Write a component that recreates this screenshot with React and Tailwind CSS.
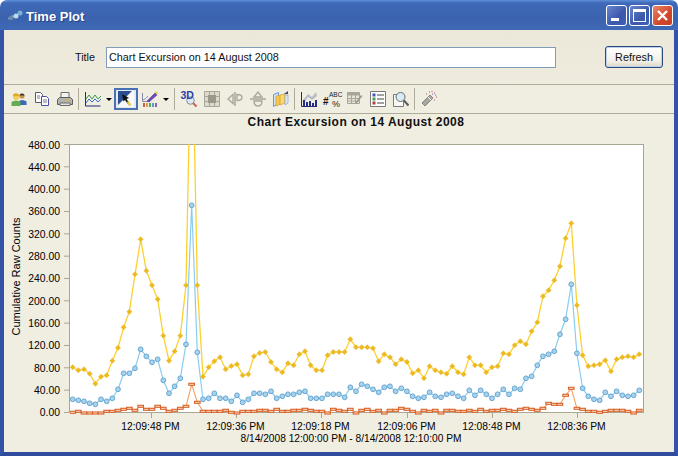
import React from "react";

// screen y of every sample, read off the plot (index 21 of the yellow one runs off the top)
const YELLOW = [367.3,370.3,369.3,373.7,383.7,376.7,375.3,360.7,347.7,327.3,311.7,274.3,239.3,270.7,285.3,299.3,335.7,360.7,351.3,335.7,285.3,3,285.3,376.7,367.3,361.3,357.3,369.3,
  366,364.3,375.3,374.3,356.3,353,352,362,369.3,372.3,363.3,365.3,354.3,351.3,365.3,370.3,370.3,355.3,352,352,352,339.3,347.3,347.3,347.3,348.3,361.3,354.3,357.3,364.3,359.3,362,373.3,370.3,378.3,366.3,370.3,372.3,373.7,366.3,372.3,
  374.3,357.3,365.3,365.3,372.3,367.3,366.3,353.3,354.3,345.3,341.3,344.3,331.3,322.3,296.3,290.3,280.3,266.3,238.3,223.3,305.3,355.3,366.3,365.3,364.3,360.3,371.3,359.3,357.3,356.3,357.3,354.3];

const BLUE = [399.3,400.3,401.3,403.3,404.3,399.3,401.3,398.3,389.3,373.3,373.3,368.3,349.3,356.3,362.3,359.3,380.3,393.3,386.3,378.3,344.3,205.3,352.3,399.3,398.3,393.3,398.3,398.3,
  401.3,395.3,402.3,399.3,393.3,393.3,394.3,391.3,398.3,396.3,394.3,394.3,392.3,391.3,398.3,398.3,398.3,394.3,394.3,394.3,397.3,387.3,391.3,384.3,386.3,389.3,392.3,387.3,386.3,391.3,388.3,391.3,396.3,398.3,397.3,392.3,396.3,397.3,394.3,393.3,396.3,
  398.3,390.3,395.3,390.3,394.3,398.3,394.3,389.3,394.3,388.3,389.3,378.3,376.3,365.3,356.3,354.3,351.3,334.3,319.3,284.3,353.3,388.3,396.3,399.3,400.3,392.3,396.3,391.3,395.3,396.3,395.3,390.3];

const ORANGE = [412.3,411.3,413,413,413,413,411.3,411.3,410.3,409.3,408.3,410.3,406.3,409.3,409.3,406.3,408.3,411.3,410.3,408.3,406.3,384.3,402.3,411.3,411.3,411.3,411.3,410.3,
  412.3,413,411.3,411.3,411.3,410.3,410.3,411.3,409.3,411.3,411.3,410.3,410.3,409.3,410.3,411.3,411.3,413,409.3,410.3,411.3,409.3,413,410.3,409.3,411.3,410.3,413,410.3,410.3,408.3,409.3,411.3,413,410.3,411.3,410.3,413,410.3,410.3,411.3,
  411.3,410.3,411.3,409.3,411.3,410.3,410.3,409.3,410.3,411.3,409.3,408.3,409.3,410.3,408.3,403.3,404.3,404.3,395.3,388.3,408.3,409.3,411.3,411.3,412.3,411.3,410.3,410.3,410.3,411.3,413,410.3];

const xAt = (i) => 72.67 + i * 5.666;
const toPoints = (ys) => ys.map((y, i) => `${xAt(i).toFixed(1)},${y}`).join(" ");

const Y_LABELS = ["480.00","440.00","400.00","360.00","320.00","280.00","240.00","200.00","160.00","120.00","80.00","40.00","0.00"];
const X_TICKS = [
  { x: 151.5, label: "12:09:48 PM" },
  { x: 236.5, label: "12:09:36 PM" },
  { x: 321.5, label: "12:09:18 PM" },
  { x: 407.5, label: "12:09:06 PM" },
  { x: 492.5, label: "12:08:48 PM" },
  { x: 577.5, label: "12:08:36 PM" },
];

function Chart() {
  return (
    <svg viewBox="4 114 670 338" className="block w-[670px] h-[338px]">
      <defs>
        <clipPath id="plot">
          <rect x="70" y="144" width="574" height="272" />
        </clipPath>
      </defs>
      <text x="356" y="126" textAnchor="middle" className="text-[12px] font-bold tracking-[0.46px] fill-[#111]">
        Chart Excursion on 14 August 2008
      </text>
      <rect x="69.5" y="144.5" width="574" height="268" fill="#fff" stroke="#a9a692" />
      {Y_LABELS.map((label, i) => {
        const y = 144.5 + i * 22.33;
        return (
          <g key={label}>
            <line x1="64" x2="70" y1={y} y2={y} stroke="#a9a692" />
            <text x="60" y={y + 4} textAnchor="end" className="text-[10.4px] fill-black">{label}</text>
          </g>
        );
      })}
      {X_TICKS.map((t) => (
        <g key={t.label}>
          <line x1={t.x} x2={t.x} y1="413" y2="418" stroke="#a9a692" />
          <text x={t.x - 1} y="430" textAnchor="middle" className="text-[10.3px] fill-black">{t.label}</text>
        </g>
      ))}
      <text x="351" y="442" textAnchor="middle" className="text-[10.2px] fill-black">
        8/14/2008 12:00:00 PM - 8/14/2008 12:10:00 PM
      </text>
      <text transform="translate(20 276.5) rotate(-90)" textAnchor="middle" className="text-[11px] fill-black">
        Cumulative Raw Counts
      </text>
      <g clipPath="url(#plot)">
        <polyline points={toPoints(YELLOW)} fill="none" stroke="#fdd02f" strokeWidth="1.3" />
        <polyline points={toPoints(BLUE)} fill="none" stroke="#88cdf0" strokeWidth="1.2" />
        <polyline points={toPoints(ORANGE)} fill="none" stroke="#f0a060" strokeWidth="1.1" />
        {YELLOW.map((y, i) => (
          <path key={i} d={`M${xAt(i)} ${y - 2.7}l2.7 2.7l-2.7 2.7l-2.7-2.7z`} fill="#edb91c" stroke="#e8c860" strokeWidth="0.4" />
        ))}
        {BLUE.map((y, i) => (
          <circle key={i} cx={xAt(i)} cy={y} r="2.4" fill="#a6d3ee" stroke="#5f9fcb" strokeWidth="0.9" />
        ))}
        {ORANGE.map((y, i) => (
          <rect key={i} x={xAt(i) - 2.8} y={y - 1} width="5.6" height="2" fill="#fbe6cf" stroke="#d9622a" strokeWidth="1.1" />
        ))}
      </g>
    </svg>
  );
}

function Caption({ kind }) {
  return (
    <div className="relative w-[21px] h-[21px] rounded-[3px] border border-white bg-[linear-gradient(135deg,#6a86cf,#3a57ab_60%,#3f62b8)] flex items-center justify-center">
      {kind === "min" && <div className="w-[8px] h-[3px] bg-white mt-[9px] mr-[3px]" />}
      {kind === "max" && <div className="w-[13px] h-[13px] border border-white border-t-[3px]" />}
    </div>
  );
}

const Users = () => (
  <svg viewBox="0 0 16 16" className="w-4 h-4">
    <circle cx="11" cy="5" r="2.6" fill="#c98f5a" />
    <path d="M8.4 4.5a2.7 2.7 0 0 1 5.2 0z" fill="#4a3524" />
    <path d="M7.5 14v-3.5q3.5-3 8 0V14z" fill="#3c69b5" />
    <circle cx="5" cy="6" r="3" fill="#f0cf58" />
    <path d="M2 5.3a3 3 0 0 1 6 0q-3-.6-6 0z" fill="#e0a820" />
    <path d="M.5 15v-4q4.5-3 9 0v4z" fill="#62ad4c" />
  </svg>
);

const Copy = () => (
  <svg viewBox="0 0 16 16" className="w-4 h-4">
    <path d="M1.5 1.5h5l2 2v8h-7z" fill="#fff" stroke="#5a5a6a" />
    <path d="M7.5 5.5h5l2 2v7h-7z" fill="#fff" stroke="#4f4fa8" />
    <path d="M3 5h3M3 7h3M9 9h4M9 11h4" stroke="#7a7a90" />
  </svg>
);

const Printer = () => (
  <svg viewBox="0 0 16 16" className="w-4 h-4">
    <path d="M4 7V1.5h8V7" fill="#f4f4f0" stroke="#6e6e6e" />
    <path d="M.5 8.5l2-2h11l2 2v5h-15z" fill="#b2b2ae" stroke="#5e5e5e" />
    <path d="M3 12h10v2.500H3z" fill="#e4e4e0" stroke="#6e6e6e" />
    <path d="M9 9h4" stroke="#e0b030" />
  </svg>
);

const LineChart = () => (
  <svg viewBox="0 0 16 16" className="w-4 h-4">
    <path d="M.5 1v14h15" fill="none" stroke="#232a78" />
    <path d="M1 8l3-4 3 4 3-4 3 4 3-3" fill="none" stroke="#3a9a4a" />
    <path d="M1 12l3-4 3 3 3-3 3 3 3-3" fill="none" stroke="#3a6ad0" />
  </svg>
);

const Pointer = () => (
  <svg viewBox="0 0 16 16" className="w-4 h-4">
    <path d="M0 0h16v16H0z" fill="#f8f8f8" />
    <path d="M0 0h14L0 14z" fill="#2c4f92" />
    <path d="M4 3l7 4-2.500 1 2.500 3.500-1.500 1-2.500-3.500-1.500 1.500z" fill="#111" />
    <path d="M10 10l3 3.500-1.500 1.500-2.500-3.500z" fill="#f5d838" stroke="#8a7a20" strokeWidth="0.300" />
  </svg>
);

const Palette = () => (
  <svg viewBox="0 0 16 16" className="w-4 h-4">
    <path d="M.5 2v8.500H8" fill="none" stroke="#8a8aa0" />
    <path d="M1 9q3-1 5-4" fill="none" stroke="#7a9ad0" />
    <path d="M5 10L13 2l2 2-8 7z" fill="#7248b8" stroke="#4a2f90" strokeWidth="0.5" />
    <path d="M12.500 1l2.500 2.500 1-2L15 .5z" fill="#e8d248" />
    <path d="M1 12h2v4H1z" fill="#d05a5a" />
    <path d="M4 12h2v4H4z" fill="#e0a040" />
    <path d="M7 12h2v4H7z" fill="#58a858" />
    <path d="M10 12h2v4h-2z" fill="#5a9ad0" />
    <path d="M13 12h2v4h-2z" fill="#8a62c0" />
  </svg>
);

const ThreeD = () => (
  <svg viewBox="0 0 16 16" className="w-4 h-4 overflow-visible">
    <circle cx="9.500" cy="9.500" r="3.800" fill="#d8e8f4" stroke="#8a8a9a" />
    <path d="M12 12l3.500 3.500" stroke="#d0604a" strokeWidth="2" />
    <text x="-0.500" y="7.500" className="text-[10.500px] font-bold fill-[#2a3fa8]">3D</text>
  </svg>
);

const GridOff = () => (
  <svg viewBox="0 0 16 16" className="w-4 h-4">
    <path d="M.5.5h15v15H.5zM.5 5.500h15M.5 10.500h15M5.500.5v15M10.500.5v15" fill="#dcdaca" stroke="#a8a698" />
    <path d="M4 4h8v8H4z" fill="#9a9888" />
  </svg>
);

const FlipH = () => (
  <svg viewBox="0 0 16 16" className="w-4 h-4">
    <path d="M8 1v14" stroke="#a8a698" strokeWidth="1.500" />
    <path d="M6 3.500L1 8l5 4.500zM10 3.500q5 0 5 3t-5 3z" fill="none" stroke="#a8a698" strokeWidth="1.300" />
  </svg>
);

const FlipV = () => (
  <svg viewBox="0 0 16 16" className="w-4 h-4">
    <path d="M0 8h16" stroke="#a8a698" strokeWidth="1.500" />
    <path d="M4 6L8 1l4 5zM4 10q0 5 4 5t4-5z" fill="none" stroke="#a8a698" strokeWidth="1.300" />
  </svg>
);

const Folder = () => (
  <svg viewBox="0 0 16 16" className="w-4 h-4">
    <path d="M.5 3.500l5-2v11l-5 3z" fill="#cfe2f6" stroke="#6a9ad0" />
    <path d="M3 5l5-1v9l-5 2z" fill="#f5c84c" stroke="#c8963a" strokeWidth="0.600" />
    <path d="M7 4l5-1v9l-5 2z" fill="#f8d868" stroke="#c8963a" strokeWidth="0.600" />
    <path d="M11 3l4-3v3h-1.500z" fill="#3a4a7a" />
    <path d="M12 4h3v8l-3 2z" fill="#dce8f4" stroke="#7a9ad0" strokeWidth="0.600" />
  </svg>
);

const BarChart = () => (
  <svg viewBox="0 0 16 16" className="w-4 h-4">
    <path d="M.5 1v14.500H16" fill="none" stroke="#232a78" />
    <path d="M2 9l5-6 4 3 4-5 1 4-5 4-4-3-4 6z" fill="#b8bcc8" />
    <path d="M2 9h2v6H2zM5 11h2v4H5zM8 10h2v5H8zM11 12h2v3h-2zM14 9h2v6h-2z" fill="#262e88" />
  </svg>
);

const AbcHash = () => (
  <svg viewBox="0 0 16 16" className="w-4 h-4 overflow-visible">
    <text x="5" y="6" className="text-[6.500px] fill-[#222]">ABC</text>
    <text x="-1" y="14" className="text-[10px] font-bold fill-[#111]">#</text>
    <text x="8" y="16" className="text-[9px] fill-[#222]">%</text>
  </svg>
);

const TablePen = () => (
  <svg viewBox="0 0 16 16" className="w-4 h-4">
    <path d="M.5 1.500h12v11H.5z" fill="#e6e4d6" stroke="#a8a698" />
    <path d="M.5 1.500h12v3H.5z" fill="#a8a698" />
    <path d="M.5 7.500h12M.5 10h12M4.500 4v8M8.500 4v8" stroke="#a8a698" />
    <path d="M15.500 5L10 12l-1.500 1 .5-2 5-7z" fill="#9a9888" />
  </svg>
);

const ListIcon = () => (
  <svg viewBox="0 0 16 16" className="w-4 h-4">
    <path d="M.5.5h15v15H.5z" fill="#fff" stroke="#7a7a78" />
    <path d="M2.500 2.500h3v3h-3z" fill="#3a5ac0" />
    <path d="M2.500 6.500h3v3h-3z" fill="#4aa04a" />
    <path d="M2.500 10.500h3v3h-3z" fill="#b83a3a" />
    <path d="M7 4h7M7 8h7M7 12h7" stroke="#444" />
  </svg>
);

const Inspect = () => (
  <svg viewBox="0 0 16 16" className="w-4 h-4">
    <path d="M.5 3.500h8l2 2v10H.5z" fill="#f8f8f4" stroke="#7a7a80" />
    <circle cx="7.500" cy="6" r="4.500" fill="#d8ecf4" stroke="#6a6a70" />
    <path d="M11 9.500l4.500 5" stroke="#5a5a5a" strokeWidth="2" />
  </svg>
);

const Wand = () => (
  <svg viewBox="0 0 16 16" className="w-4 h-4">
    <path d="M1 12L9 4l3 3-8 8z" fill="#a8a8a0" stroke="#6a6a68" strokeWidth="0.700" />
    <path d="M7 6l3 3" stroke="#f4f4f0" />
    <path d="M8 1h1M13 2h1M15 6h1M11 0v1M13 9h1M5 3h1" stroke="#c04a8a" />
    <path d="M11 3h1M14 4h1" stroke="#6a6ac0" />
  </svg>
);

function Tool({ children }) {
  return <div className="w-[23px] h-[21px] flex items-center justify-center">{children}</div>;
}

const Sep = ({ w }) => (
  <div className={`${w} flex justify-center`}>
    <div className="w-px h-[22px] bg-[#aeab9a]" />
  </div>
);

const Arrow = ({ w }) => (
  <div className={`${w} flex justify-center`}>
    <div className="w-0 h-0 border-x-[3px] border-x-transparent border-t-[3px] border-t-black" />
  </div>
);

export default function App() {
  return (
    <div className="w-[678px] h-[456px] flex flex-col overflow-hidden bg-white font-['Liberation_Sans',Arial,sans-serif]">
      {/* Title bar */}
      <div className="h-[30px] shrink-0 rounded-t-[7px] flex items-center pl-[7px] pr-[5px] bg-[linear-gradient(180deg,#5f8fd8_0,#3f69b8_3px,#3a62ae_60%,#3f69b6_100%)]">
        <svg viewBox="0 0 16 16" className="w-4 h-4 mt-[2px]">
          <path d="M1 11l4-3 3 1 5-5" fill="none" stroke="#7fb4d8" strokeWidth="1.500" />
          <circle cx="4" cy="10" r="2.200" fill="#6a8aa8" />
          <circle cx="9" cy="8" r="2.500" fill="#b8dcec" />
          <circle cx="13" cy="5" r="2.500" fill="#7ab0d4" />
        </svg>
        <span className="ml-[3px] mt-[3px] text-white font-bold text-[13px] [text-shadow:1px_1px_0_#22408a]">Time Plot</span>
        <div className="ml-auto flex gap-[2px]">
          <Caption kind="min" />
          <Caption kind="max" />
          <div className="w-[21px] h-[21px] rounded-[3px] border border-white bg-[linear-gradient(135deg,#e8866a,#d2472a_60%,#c8402a)] flex items-center justify-center">
            <svg viewBox="0 0 13 13" className="w-[13px] h-[13px]">
              <path d="M2 2l9 9M11 2l-9 9" stroke="#fff" strokeWidth="2.400" />
            </svg>
          </div>
        </div>
      </div>

      {/* Window body */}
      <div className="flex-1 min-h-0 flex flex-col border-x-4 border-b-4 border-[#3453a6] border-b-[#2f4c9c] bg-[#f0ede1]">
        <div className="h-[54px] shrink-0 flex items-center bg-[linear-gradient(180deg,#ebe8d9,#efecdf)]">
          <span className="ml-[71px] w-[31px] text-[10.8px] text-[#111] mt-[1px]">Title</span>
          <input
            readOnly
            value="Chart Excursion on 14 August 2008"
            className="w-[450px] h-[21px] px-[2px] bg-white border border-[#7f9db9] text-[10.8px] text-[#111] outline-none"
          />
          <button className="ml-[49px] w-[58px] h-[22px] rounded-[3px] border border-[#2b4a80] bg-[linear-gradient(180deg,#fff,#f2f0e6_70%,#dcd8c8)] shadow-[inset_0_0_0_1px_#bcd0ec] text-[10.8px] text-[#111]">
            Refresh
          </button>
        </div>

        {/* Toolbar */}
        <div className="h-[30px] shrink-0 flex items-center pl-[3px] border-y border-[#aeab9a]">
          <Tool><Users /></Tool>
          <Tool><Copy /></Tool>
          <Tool><Printer /></Tool>
          <Sep w="w-[5px]" />
          <Tool><LineChart /></Tool>
          <Arrow w="w-[10px]" />
          <div className="w-[24px] h-[22px] flex items-center justify-center border-2 border-[#4a70b4] bg-[#e4eaf4]">
            <Pointer />
          </div>
          <Tool><Palette /></Tool>
          <Arrow w="w-[10px]" />
          <Sep w="w-[6px]" />
          <Tool><ThreeD /></Tool>
          <Tool><GridOff /></Tool>
          <Tool><FlipH /></Tool>
          <Tool><FlipV /></Tool>
          <Tool><Folder /></Tool>
          <Sep w="w-[5px]" />
          <Tool><BarChart /></Tool>
          <Tool><AbcHash /></Tool>
          <Tool><TablePen /></Tool>
          <Tool><ListIcon /></Tool>
          <Tool><Inspect /></Tool>
          <Sep w="w-[5px]" />
          <Tool><Wand /></Tool>
        </div>

        <Chart />
      </div>
    </div>
  );
}
